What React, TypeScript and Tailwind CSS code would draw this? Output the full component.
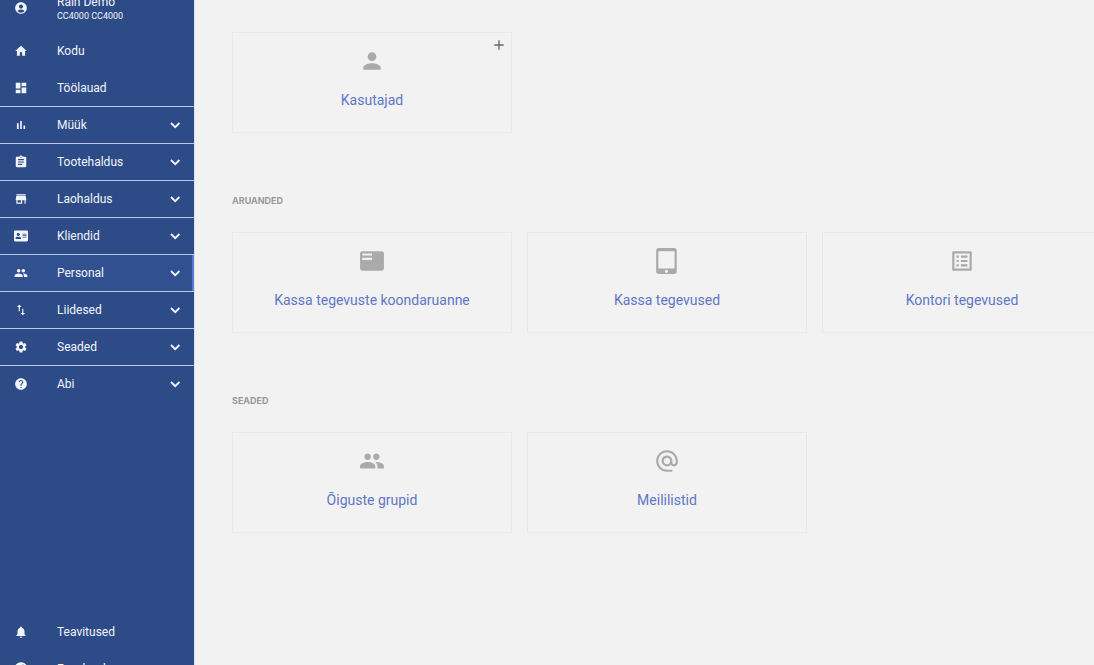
import React from "react";
import type { IconType } from "react-icons";
import {
  MdAccountCircle,
  MdAdd,
  MdAlternateEmail,
  MdAssignment,
  MdDashboard,
  MdFeaturedPlayList,
  MdHelp,
  MdHome,
  MdImportExport,
  MdListAlt,
  MdNotifications,
  MdPeople,
  MdPerson,
  MdSettings,
  MdStore,
  MdTabletMac,
} from "react-icons/md";
import { FaAddressCard, FaFacebook } from "react-icons/fa";

interface IconProps {
  className?: string;
}

interface IMenuItem {
  label: string;
  icon: IconType | React.FC<IconProps>;
  active?: boolean;
}

interface ICard {
  label: string;
  icon: IconType;
  canAdd?: boolean;
}

const BarsIcon: React.FC<IconProps> = ({ className }) => (
  <svg viewBox="0 0 24 24" fill="currentColor" className={className}>
    <path d="M5 9.2h3V19H5zM10.6 5h2.8v14h-2.8zm5.6 8H19v6h-2.8z" />
  </svg>
);

const ChevronIcon: React.FC<IconProps> = ({ className }) => (
  <svg
    viewBox="0 0 18 18"
    fill="none"
    stroke="currentColor"
    strokeWidth="1.8"
    className={className}
  >
    <path d="M5 7l4.2 4.2L13.4 7" />
  </svg>
);

const links: IMenuItem[] = [
  { label: "Kodu", icon: MdHome },
  { label: "Töölauad", icon: MdDashboard },
];

const groups: IMenuItem[] = [
  { label: "Müük", icon: BarsIcon },
  { label: "Tootehaldus", icon: MdAssignment },
  { label: "Laohaldus", icon: MdStore },
  { label: "Kliendid", icon: FaAddressCard },
  { label: "Personal", icon: MdPeople, active: true },
  { label: "Liidesed", icon: MdImportExport },
  { label: "Seaded", icon: MdSettings },
  { label: "Abi", icon: MdHelp },
];

const footerLinks: IMenuItem[] = [
  { label: "Teavitused", icon: MdNotifications },
  { label: "Facebook", icon: FaFacebook },
];

const userCards: ICard[] = [
  { label: "Kasutajad", icon: MdPerson, canAdd: true },
];

const reportCards: ICard[] = [
  { label: "Kassa tegevuste koondaruanne", icon: MdFeaturedPlayList },
  { label: "Kassa tegevused", icon: MdTabletMac },
  { label: "Kontori tegevused", icon: MdListAlt },
];

const settingCards: ICard[] = [
  { label: "Õiguste grupid", icon: MdPeople },
  { label: "Meililistid", icon: MdAlternateEmail },
];

const MenuLink: React.FC<{ item: IMenuItem }> = ({ item }) => (
  <a href="#" className="flex h-[37px] shrink-0 items-center pl-3.5">
    <item.icon className="size-3.5 shrink-0" />
    <span className="pl-[29px]">{item.label}</span>
  </a>
);

const MenuGroup: React.FC<{ item: IMenuItem }> = ({ item }) => (
  <button
    type="button"
    className={
      item.active
        ? "flex h-9 w-full items-center border-r-2 border-r-[#5b78d0] bg-[#30508f] pr-2 pl-3.5"
        : "flex h-9 w-full items-center pr-2.5 pl-3.5"
    }
  >
    <item.icon className="size-3.5 shrink-0" />
    <span className="flex-1 pl-[29px] text-left">{item.label}</span>
    <ChevronIcon className="size-[18px]" />
  </button>
);

const Card: React.FC<{ card: ICard }> = ({ card }) => (
  <div className="relative h-[101px] border border-[#e9e9e9]">
    <a href="#" className="flex h-full flex-col items-center pt-[15px]">
      <card.icon className="size-[26px] text-[#aaaaaa]" />
      <span className="pt-4 text-sm leading-5 text-[#5f77c5]">
        {card.label}
      </span>
    </a>
    {card.canAdd && (
      <button
        type="button"
        aria-label="Lisa"
        className="absolute top-1 right-1 text-[#666666]"
      >
        <MdAdd className="size-4" />
      </button>
    )}
  </div>
);

const CardSection: React.FC<{ title?: string; cards: ICard[] }> = ({
  title,
  cards,
}) => (
  <section>
    {title && (
      <h2 className="pb-[23px] font-['Inter',sans-serif] text-[9px] leading-4 font-bold text-[#999999] uppercase">
        {title}
      </h2>
    )}
    <div className="grid grid-cols-[repeat(3,280px)] gap-[15px]">
      {cards.map((card) => (
        <Card key={card.label} card={card} />
      ))}
    </div>
  </section>
);

const Sidebar: React.FC = () => (
  <nav className="flex w-[195px] shrink-0 flex-col border-r border-[#dfe3ee] bg-[#2d4b86] text-xs text-[#f2f5fc]">
    <a href="#" className="-mt-4 flex h-12 shrink-0 items-center pl-3.5">
      <MdAccountCircle className="size-3.5 shrink-0" />
      <span className="flex flex-col pl-[29px]">
        <span className="leading-4">Rain Demo</span>
        <span className="text-[9px] leading-3">CC4000 CC4000</span>
      </span>
    </a>
    <div className="flex flex-col">
      {links.map((item) => (
        <MenuLink key={item.label} item={item} />
      ))}
    </div>
    <ul className="flex flex-col">
      {groups.map((item) => (
        <li key={item.label} className="border-t border-[#b9c8e6]">
          <MenuGroup item={item} />
        </li>
      ))}
    </ul>
    <div className="mt-auto -mb-[22px] flex flex-col">
      {footerLinks.map((item) => (
        <MenuLink key={item.label} item={item} />
      ))}
    </div>
  </nav>
);

const App: React.FC = () => (
  <div className="flex h-screen overflow-hidden bg-[#f2f2f2] font-['Roboto','Noto_Sans',sans-serif]">
    <Sidebar />
    <main className="flex min-w-0 flex-1 flex-col gap-[60px] overflow-hidden pt-8 pl-[37px]">
      <CardSection cards={userCards} />
      <CardSection title="Aruanded" cards={reportCards} />
      <CardSection title="Seaded" cards={settingCards} />
    </main>
  </div>
);

export default App;
